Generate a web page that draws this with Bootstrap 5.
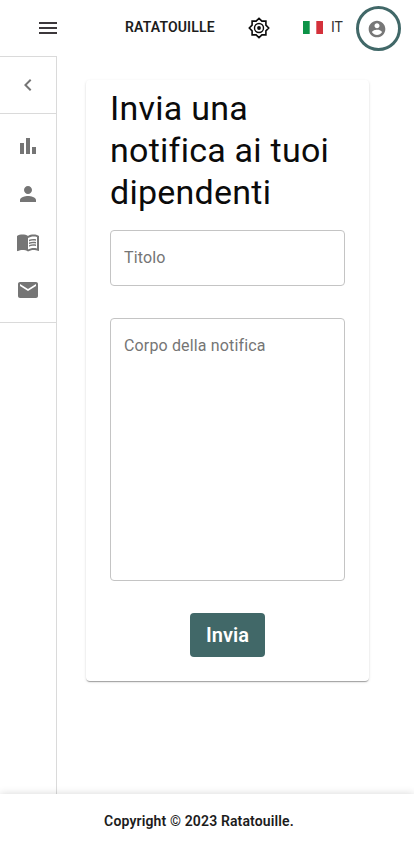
<!DOCTYPE html>
<html lang="it">
<head>
<meta charset="utf-8">
<meta name="viewport" content="width=device-width, initial-scale=1">
<title>Ratatouille</title>
<link href="https://cdn.jsdelivr.net/npm/bootstrap@5.3.0/dist/css/bootstrap.min.css" rel="stylesheet">
<style>
body{font-family:Roboto,"Liberation Sans",sans-serif;color:#111;height:850px;overflow:hidden;background:#fff}
svg{display:block;fill:currentColor;flex:none}
button{color:inherit}
.topbar{height:56px;padding-left:36px;padding-right:13px}
.menu-btn{color:#3c383b}
.brand-name{font-size:14px;font-weight:600;line-height:20px;letter-spacing:.15px;margin-left:65px;width:90px;white-space:nowrap;color:#1c1c1c;margin-top:-2px}
.theme-btn{margin-left:32px;color:#0c0c0c}
.lang{margin-left:32px;font-size:14px;line-height:20px;color:#333;gap:8px;margin-top:-1px}
.lang span{padding-bottom:2px}
.avatar-btn{width:45px;height:45px;border:3px solid #416868;margin-left:auto;color:#777}
.avatar-btn svg{margin-top:2px;margin-right:3px}
.side{width:57px;border-right:1px solid #dadada;border-top:1px solid #dadada;color:#757575}
.side-top{height:57px;border-bottom:1px solid #dadada}
.side-list{border-bottom:1px solid #dadada}
.side-item{height:48px}
.panel{width:283px;height:601px;margin:24px 0 0 29px;padding:7px 24px 24px;border-radius:4px;box-shadow:0 2px 1px -1px rgba(0,0,0,.2),0 1px 1px rgba(0,0,0,.14),0 1px 3px rgba(0,0,0,.12)}
.title{font-size:34px;font-weight:400;line-height:42px;letter-spacing:.25px;margin:0 0 17px;color:#0b0b0b}
.field,.field:focus{border:1px solid #c4c4c4;border-radius:4px;padding:15px 13px;font-size:16px;line-height:24px;letter-spacing:.15px;color:#333;resize:none;box-shadow:none}
.field::placeholder{color:#757575;opacity:1}
.field-title,.field-title:focus{height:56px;padding-top:14px;padding-bottom:16px}
.field-body{height:263px;margin-top:32px}
.send{width:75px;height:44px;margin-top:32px;background:#416868;color:#fff;font-size:20px;font-weight:600;line-height:24px;border-radius:4px}
.foot{height:56px;font-size:14px;font-weight:600;line-height:20px;letter-spacing:.14px;color:#1c1c1c;box-shadow:0 0 8px rgba(0,0,0,.16);padding-right:16px;padding-bottom:2px;background:#fff;z-index:1}
</style>
<script src="https://cdn.jsdelivr.net/npm/bootstrap@5.3.0/dist/js/bootstrap.bundle.min.js"></script>
</head>
<body class="d-flex flex-column">
<header class="topbar d-flex align-items-center flex-shrink-0">
  <button class="menu-btn btn p-0 border-0" aria-label="Menu"><svg width="24" height="24" viewBox="0 0 24 24"><path d="M3 18h18v-2H3v2zm0-5h18v-2H3v2zm0-7v2h18V6H3z"/></svg></button>
  <div class="brand-name">RATATOUILLE</div>
  <button class="theme-btn btn p-0 border-0" aria-label="Tema"><svg width="24" height="24" viewBox="0 0 24 24"><path fill="none" stroke="currentColor" stroke-width="1.6" d="M12 2.300 14.900 5.100H18.900V9.100L21.700 12 18.900 14.900V18.900H14.900L12 21.700 9.100 18.900H5.100V14.900L2.300 12 5.100 9.100V5.100H9.100z"/><circle cx="12" cy="12" r="4.500" fill="none" stroke="currentColor" stroke-width="1.400"/><circle cx="12" cy="12" r="1.900"/></svg></button>
  <div class="lang d-flex align-items-center"><svg width="20" height="13" viewBox="0 0 20 13"><path fill="#fff" d="M0 0h20v13H0z"/><path fill="#0c9347" d="M0 0h6.700v13H0z"/><path fill="#d4313b" d="M13.300 0H20v13h-6.700z"/></svg><span>IT</span></div>
  <button class="avatar-btn btn p-0 rounded-circle d-flex align-items-center justify-content-center" aria-label="Profilo"><svg width="20" height="20" viewBox="0 0 24 24"><path d="M12 2C6.480 2 2 6.480 2 12s4.480 10 10 10 10-4.480 10-10S17.520 2 12 2zm0 3c1.660 0 3 1.340 3 3s-1.340 3-3 3-3-1.340-3-3 1.340-3 3-3zm0 14.200c-2.500 0-4.710-1.280-6-3.220.030-1.990 4-3.080 6-3.080 1.990 0 5.970 1.090 6 3.080-1.290 1.940-3.500 3.220-6 3.220z"/></svg></button>
</header>
<div class="d-flex flex-grow-1">
  <nav class="side flex-shrink-0">
    <div class="side-top d-flex align-items-center justify-content-center"><svg width="24" height="24" viewBox="0 0 24 24"><path d="M15.410 7.410 14 6l-6 6 6 6 1.410-1.410L10.830 12z"/></svg></div>
    <div class="side-list py-2">
      <div class="side-item d-flex align-items-center justify-content-center"><svg width="24" height="24" viewBox="0 0 24 24"><path d="M4 9h4v11H4zm12 4h4v7h-4zm-6-9h4v16h-4z"/></svg></div>
      <div class="side-item d-flex align-items-center justify-content-center"><svg width="24" height="24" viewBox="0 0 24 24"><path d="M12 12c2.210 0 4-1.790 4-4s-1.790-4-4-4-4 1.790-4 4 1.790 4 4 4zm0 2c-2.670 0-8 1.340-8 4v2h16v-2c0-2.660-5.330-4-8-4z"/></svg></div>
      <div class="side-item d-flex align-items-center justify-content-center"><svg width="24" height="24" viewBox="0 0 24 24"><path d="M21 5c-1.110-.35-2.330-.5-3.500-.5-1.950 0-4.050.4-5.500 1.500-1.450-1.100-3.550-1.500-5.500-1.500S2.450 4.900 1 6v14.650c0 .25.25.5.5.5.1 0 .15-.05.25-.05C3.100 20.450 5.050 20 6.500 20c1.950 0 4.050.4 5.500 1.500 1.350-.85 3.800-1.500 5.500-1.500 1.650 0 3.350.3 4.750 1.050.1.050.15.050.25.050.25 0 .5-.25.5-.5V6c-.6-.45-1.250-.75-2-1zm0 13.500c-1.100-.35-2.300-.5-3.500-.5-1.700 0-4.150.65-5.500 1.500V8c1.350-.85 3.800-1.500 5.500-1.500 1.200 0 2.400.15 3.500.5v11.500z"/><path d="M17.500 10.500c.88 0 1.730.09 2.500.26V9.240c-.79-.15-1.640-.24-2.500-.24-1.700 0-3.240.29-4.500.83v1.660c1.130-.64 2.700-.99 4.500-.99zM13 12.490v1.660c1.130-.64 2.700-.99 4.500-.99.88 0 1.730.09 2.500.26V11.900c-.79-.15-1.640-.24-2.500-.24-1.700 0-3.240.3-4.500.83zm4.500 1.840c-1.700 0-3.240.29-4.500.83v1.660c1.130-.64 2.700-.99 4.500-.99.88 0 1.730.09 2.500.26v-1.520c-.79-.16-1.640-.24-2.500-.24z"/></svg></div>
      <div class="side-item d-flex align-items-center justify-content-center"><svg width="24" height="24" viewBox="0 0 24 24"><path d="M20 4H4c-1.100 0-1.990.9-1.990 2L2 18c0 1.100.9 2 2 2h16c1.100 0 2-.9 2-2V6c0-1.100-.9-2-2-2zm0 4-8 5-8-5V6l8 5 8-5v2z"/></svg></div>
    </div>
  </nav>
  <main>
    <form class="panel d-flex flex-column">
      <h1 class="title">Invia una notifica ai tuoi dipendenti</h1>
      <input class="field field-title form-control" type="text" placeholder="Titolo" aria-label="Titolo">
      <textarea class="field field-body form-control" placeholder="Corpo della notifica" aria-label="Corpo della notifica"></textarea>
      <button type="button" class="send btn border-0 p-0 align-self-center">Invia</button>
    </form>
  </main>
</div>
<footer class="foot d-flex align-items-center justify-content-center flex-shrink-0 position-relative">Copyright © 2023 Ratatouille.</footer>
</body>
</html>
